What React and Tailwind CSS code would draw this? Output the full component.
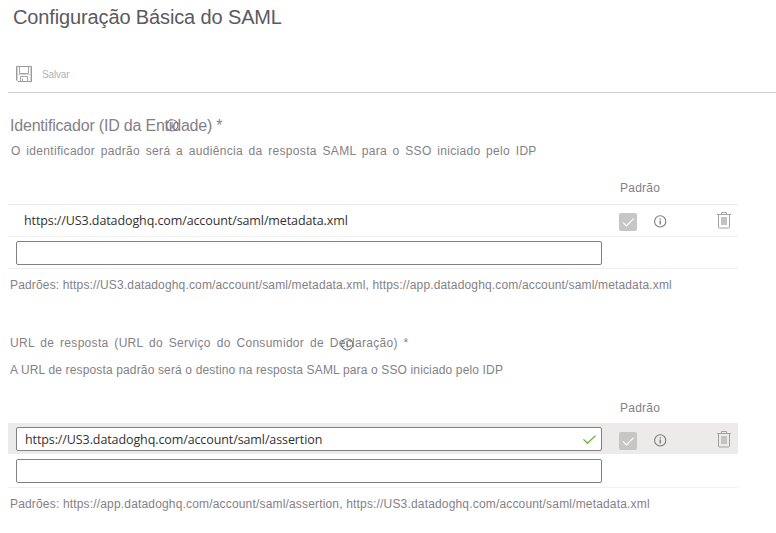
import React from "react";

const SANS = "font-['Liberation_Sans',Arial,sans-serif]";
const UI = "font-['Open_Sans','Noto_Sans',sans-serif]";

function SaveIcon() {
  return (
    <svg className="block h-4 w-4 shrink-0" viewBox="0 0 16 16" fill="none" stroke="#9a9a9a">
      <path d="M.5.5h15v15H2L.5 14z" />
      <path d="M3.5 1v6.5h9V1M4.5 15.5v-5h7v5M6.5 12.5v3" stroke="#a6a6a6" />
      <path d="M1.5 1v13.5M14.5 1v14M1 8.5h14" stroke="#d4d4d4" />
    </svg>
  );
}

function InfoIcon({ className = "" }) {
  return (
    <svg className={`block h-[13px] w-[13px] ${className}`} viewBox="0 0 13 13" fill="none" stroke="#7a7877">
      <circle cx="6.2" cy="6.4" r="5.6" strokeWidth="1.05" />
      <path d="M6.2 5.4v4.1M6.2 3.2v1.3" strokeWidth="1.3" />
    </svg>
  );
}

function TrashIcon() {
  return (
    <svg className="block h-[17px] w-[14px]" viewBox="0 0 14 17" fill="none" stroke="#a3a19f">
      <path d="M4.5 2V.5h5V2M0 2.5h14M1.5 3v12.2q0 .8.8.8h9.4q.8 0 .8-.8V3" />
      <path d="M4 5h6v8H4z" fill="#c4c3c2" stroke="none" />
    </svg>
  );
}

function CheckBox() {
  return (
    <div className="flex h-[18px] w-[18px] items-center justify-center rounded-[2px] bg-[#c8c6c4]">
      <svg className="block h-[18px] w-[18px]" viewBox="0 0 18 18" fill="none" stroke="#fff" strokeWidth="1.1">
        <path d="M4 9.4l3.4 3.5L14.6 5.6" />
      </svg>
    </div>
  );
}

function RowActions() {
  return (
    <div className="flex">
      <div className="-mt-[2px] ml-[17px]"><CheckBox /></div>
      <InfoIcon className="ml-[17px]" />
      <div className="-mt-[3px] ml-[50px]"><TrashIcon /></div>
    </div>
  );
}

function Field({ children }) {
  return (
    <div className={`flex h-6 w-[586px] items-center justify-between rounded-[2px] border border-[#828180] bg-white ${UI}`}>
      {children}
    </div>
  );
}

export default function App() {
  return (
    <div className={`h-[533px] w-[776px] overflow-hidden bg-white text-[#838188] ${SANS} whitespace-nowrap`}>
      <header className="flex h-[92px] flex-col pl-[12px]">
        <h1 className="mt-[5px] h-6 pl-px text-[20px] leading-6 tracking-[-0.13px] text-[#5c595f]">Configuração Básica do SAML</h1>
        <div className="mt-[37px] flex h-4 items-center pl-[4px]">
          <SaveIcon />
          <span className="ml-[10px] mt-[2px] text-[10px] leading-4 tracking-[-0.15px] text-[#b3b1b4]">Salvar</span>
        </div>
      </header>
      <div className="ml-2 h-px bg-[#d2d2d2]" />

      <section className="ml-2 w-[730px]">
        <div className="relative mt-[23px] h-5 pl-[2px] text-[16px] leading-5 tracking-[-0.2px]">
          Identificador (ID da Entidade) *
          <InfoIcon className="absolute left-[158px] top-[3px]" />
        </div>
        <p className="mt-[7px] h-4 pl-[3px] text-[12px] leading-4 tracking-[0.32px] [word-spacing:2px]">O identificador padrão será a audiência da resposta SAML para o SSO iniciado pelo IDP</p>
        <div className="mt-[21px] h-[25px] border-b border-[#eaeaea] pl-[612px] text-[12px] leading-4 tracking-[0.25px]">Padrão</div>
        <div className="flex h-8 border-b border-[#f0f0f0]">
          <div className={`w-[594px] pl-4 text-[12.5px] leading-[31px] tracking-[-0.1px] text-[#323130] ${UI}`}>https://US3.datadoghq.com/account/saml/metadata.xml</div>
          <div className="mt-[10px]"><RowActions /></div>
        </div>
        <div className="h-8 border-b border-[#f0f0f0] pl-2 pt-1"><Field /></div>
        <p className="mt-2 h-4 pl-[2px] text-[12px] leading-4 tracking-[0.155px]">Padrões: https://US3.datadoghq.com/account/saml/metadata.xml, https://app.datadoghq.com/account/saml/metadata.xml</p>
      </section>

      <section className="ml-2 w-[730px]">
        <div className="relative mt-[42px] h-4 pl-[2px] text-[12px] leading-4 tracking-[0.3px] [word-spacing:2.2px]">
          URL de resposta (URL do Serviço do Consumidor de Declaração) *
          <InfoIcon className="absolute left-[333px] top-[3px]" />
        </div>
        <p className="mt-[11px] h-4 pl-[2px] text-[12px] leading-4 tracking-[0.145px]">A URL de resposta padrão será o destino na resposta SAML para o SSO iniciado pelo IDP</p>
        <div className="mt-[22px] h-[23px] pl-[612px] text-[12px] leading-4 tracking-[0.25px]">Padrão</div>
        <div className="flex h-[31px] bg-[#edebe9] pl-2 pt-1">
          <Field>
            <span className="pl-2 pt-px text-[12.5px] leading-[22px] tracking-[-0.1px] text-[#323130]">https://US3.datadoghq.com/account/saml/assertion</span>
            <svg className="mr-[5px] block h-[9px] w-[13px]" viewBox="0 0 13 9" fill="none" stroke="#6bb02f" strokeWidth="1.3">
              <path d="M.5 4.4l4 3.9L12.5.6" />
            </svg>
          </Field>
          <div className="mt-[7px]"><RowActions /></div>
        </div>
        <div className="h-[34px] border-b border-[#f0f0f0] pl-2 pt-[5px]"><Field /></div>
        <p className="mt-2 h-4 pl-[2px] text-[12px] leading-4 tracking-[0.17px]">Padrões: https://app.datadoghq.com/account/saml/assertion, https://US3.datadoghq.com/account/saml/metadata.xml</p>
      </section>
    </div>
  );
}
